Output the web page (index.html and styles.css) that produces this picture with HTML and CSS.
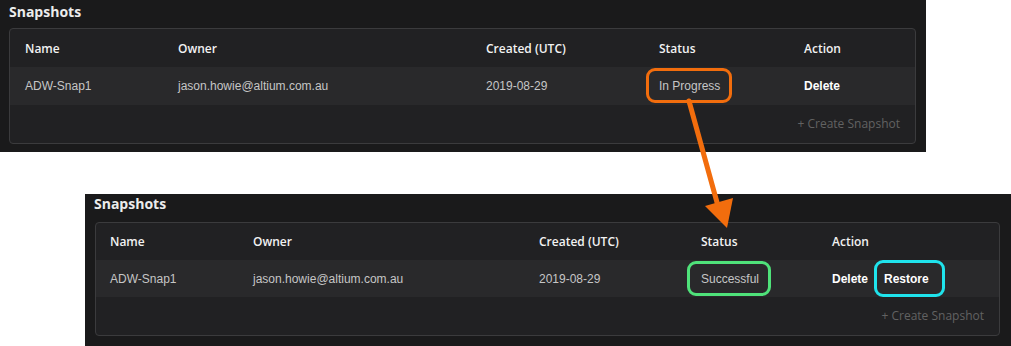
FILE: index.html
```html
<!DOCTYPE html>
<html lang="en">
<head>
    <meta charset="UTF-8">
    <meta name="viewport" content="width=device-width, initial-scale=1.0">
    <title>Snapshots</title>
    <link rel="stylesheet" href="styles.css">
</head>
<body>
    <div class="page">

        <!-- before -->
        <div class="panel panel-before">
            <h2 class="title">Snapshots</h2>
            <div class="card">
                <div class="row head">
                    <span>Name</span>
                    <span>Owner</span>
                    <span>Created (UTC)</span>
                    <span>Status</span>
                    <span>Action</span>
                </div>
                <div class="row data">
                    <span>ADW-Snap1</span>
                    <span>jason.howie@altium.com.au</span>
                    <span>2019-08-29</span>
                    <span><span class="mark mark-orange">In Progress</span></span>
                    <span class="actions"><b>Delete</b></span>
                </div>
                <div class="foot">+ Create Snapshot</div>
            </div>
        </div>

        <!-- after -->
        <div class="panel panel-after">
            <h2 class="title">Snapshots</h2>
            <div class="card">
                <div class="row head">
                    <span>Name</span>
                    <span>Owner</span>
                    <span>Created (UTC)</span>
                    <span>Status</span>
                    <span>Action</span>
                </div>
                <div class="row data">
                    <span>ADW-Snap1</span>
                    <span>jason.howie@altium.com.au</span>
                    <span>2019-08-29</span>
                    <span><span class="mark mark-green">Successful</span></span>
                    <span class="actions"><b>Delete</b><b class="mark mark-cyan">Restore</b></span>
                </div>
                <div class="foot">+ Create Snapshot</div>
            </div>
        </div>

        <svg class="arrow" width="1011" height="346" viewBox="0 0 1011 346">
            <line x1="689" y1="101" x2="718" y2="206" stroke="#f26d0d" stroke-width="5" stroke-linecap="round"/>
            <polygon points="705,206 733,198 727,228" fill="#f26d0d"/>
        </svg>
    </div>
</body>
</html>
```

FILE: styles.css
```css
*{
    margin: 0px;
    padding: 0px;
    box-sizing: border-box;
}

body{
    background-color: #ffffff;
    font-family: "Liberation Sans", Arial, sans-serif;
    font-size: 12px;
}

.page{
    position: relative;
    width: 1011px;
    height: 346px;
}

.panel{
    width: 926px;
    height: 152px;
    background-color: #1a1a1b;
    padding: 0px 10px 10px 9px;
}

.panel-after{
    margin-top: 42px;
    margin-left: 85px;
    padding: 0px 11px 10px 10px;
}

.title{
    height: 28px;
    padding-top: 2px;
    line-height: 20px;
    font-family: "Open Sans", sans-serif;
    font-size: 14px;
    font-weight: 700;
    color: #ececec;
}

.panel-after .title{
    padding-top: 0px;
    margin-left: -1px;
}

.card{
    background-color: #212123;
    border: 1px solid #3b3b3d;
    border-radius: 4px;
}

.row{
    display: grid;
    grid-template-columns: 153px 308px 173px 145px 1fr;
    align-items: center;
    height: 38px;
    padding: 0px 15px;
}

.panel-after .row{
    grid-template-columns: 143px 286px 162px 131px 1fr;
    padding: 0px 14px;
    height: 37px;
}

.row.head{
    font-family: "Open Sans", sans-serif;
    font-weight: 600;
    color: #f2f2f2;
}

.row.data{
    background-color: #29292b;
    color: #c6c6c6;
}

.actions{
    display: flex;
    gap: 16px;
}

.actions b{
    color: #ffffff;
}

.mark{
    position: relative;
    display: inline-block;
}

.mark::after{
    content: "";
    position: absolute;
    top: -11px;
    bottom: -10px;
    left: -13px;
    right: -12px;
    border: 3px solid;
    border-radius: 9px;
}

.mark-orange::after{
    border-color: #f26d0d;
}

.mark-green::after{
    border-color: #4fe27a;
    left: -14px;
}

.mark-cyan::after{
    border-color: #1fe3ec;
    top: -12px;
    bottom: -11px;
    left: -10px;
    right: -16px;
}

.foot{
    height: 38px;
    line-height: 38px;
    padding-right: 15px;
    text-align: right;
    font-family: "Open Sans", sans-serif;
    color: #626262;
}

.arrow{
    position: absolute;
    left: 0px;
    top: 0px;
    pointer-events: none;
}
```
